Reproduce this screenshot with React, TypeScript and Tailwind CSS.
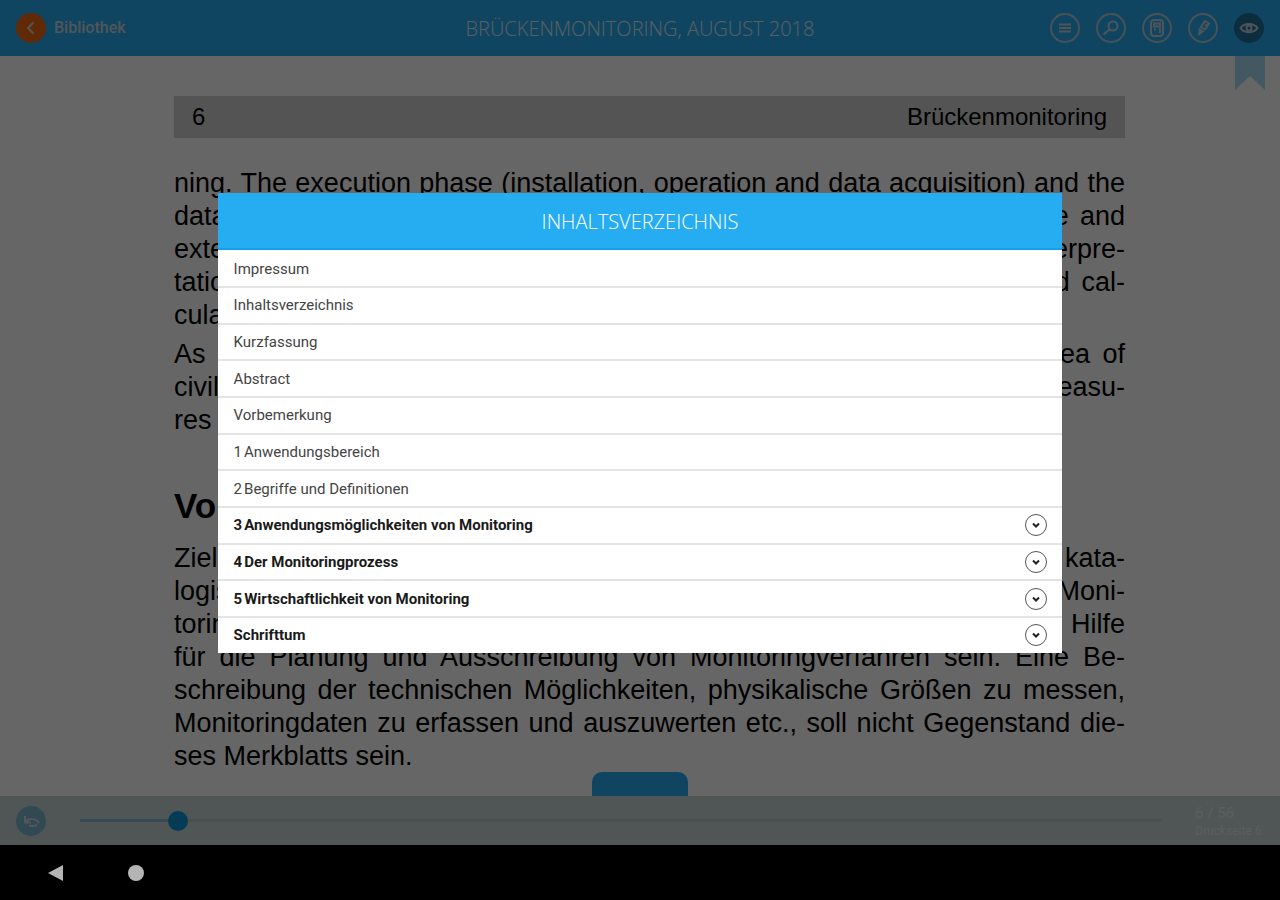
import { useState, type ReactNode } from "react";

type Chapter = {
	title: string;
	number?: string;
	nested?: boolean;
};

const CHAPTERS: Chapter[] = [
	{ title: "Impressum" },
	{ title: "Inhaltsverzeichnis" },
	{ title: "Kurzfassung" },
	{ title: "Abstract" },
	{ title: "Vorbemerkung" },
	{ number: "1", title: "Anwendungsbereich" },
	{ number: "2", title: "Begriffe und Definitionen" },
	{ number: "3", title: "Anwendungsmöglichkeiten von Monitoring", nested: true },
	{ number: "4", title: "Der Monitoringprozess", nested: true },
	{ number: "5", title: "Wirtschaftlichkeit von Monitoring", nested: true },
	{ title: "Schrifttum", nested: true },
];

const ABSTRACT_END = [
	"ning. The execution phase (installation, operation and data acquisition) and the",
	"data processing phase are described in detail with regard to their scope and",
	"extent. Some notes are given on the evaluation of results and their interpre-",
	"tation, as well as on the comparison between the measured values and cal-",
	"culations.",
];

const ABSTRACT_NOTE = [
	"As monitoring is being used more and more frequently in the wider area of",
	"civil engineering, there is a growing need for guidance on all such measu-",
	"res in practice.",
];

const PREFACE = [
	"Ziel des Merkblatts ist es, die Aufgaben des Monitorings in einer kata-",
	"logisierten Form zu erfassen und die Anforderungen an ein solches Moni-",
	"toring zu beschreiben. Das Merkblatt soll damit zugleich auch eine Hilfe",
	"für die Planung und Ausschreibung von Monitoringverfahren sein. Eine Be-",
	"schreibung der technischen Möglichkeiten, physikalische Größen zu messen,",
	"Monitoringdaten zu erfassen und auszuwerten etc., soll nicht Gegenstand die-",
	"ses Merkblatts sein.",
];

const PAGE_COUNT = 56;

// Every line fills the column except the last one of the paragraph.
function Paragraph({ lines }: { lines: string[] }) {
	return (
		<p className="text-[27px] leading-[33px] whitespace-nowrap">
			{lines.map((line, i) => (
				<span
					key={line}
					className={
						i < lines.length - 1
							? "block text-justify [text-align-last:justify]"
							: "block"
					}
				>
					{line}
				</span>
			))}
		</p>
	);
}

function ToolButton({
	label,
	active,
	children,
}: {
	label: string;
	active?: boolean;
	children: ReactNode;
}) {
	return (
		<button
			type="button"
			aria-label={label}
			className={
				active
					? "flex size-[30px] items-center justify-center rounded-full bg-[#207098] text-[#c4d4dc]"
					: "flex size-[30px] items-center justify-center rounded-full border-2 border-[#b8ccd8] text-[#c4d4dc]"
			}
		>
			<svg
				viewBox="0 0 20 20"
				className="size-5 shrink-0"
				fill="none"
				stroke="currentColor"
				strokeWidth="2"
			>
				{children}
			</svg>
		</button>
	);
}

export default function App() {
	const [page, setPage] = useState(6);
	const progress = ((page - 1) / (PAGE_COUNT - 1)) * 100;

	return (
		<div className="flex h-screen flex-col bg-black font-[Roboto,sans-serif]">
			<div className="relative flex min-h-0 flex-1 flex-col bg-white">
				<header className="grid h-14 shrink-0 grid-cols-[1fr_auto_1fr] items-center bg-[#26adf1] px-4">
					<button type="button" className="flex items-center gap-2 text-[#c9d6de]">
						<span className="flex size-[30px] items-center justify-center rounded-full bg-[#f06a10]">
							<svg
								viewBox="0 0 20 20"
								className="size-5 text-[#dcd0c8]"
								fill="none"
								stroke="currentColor"
								strokeWidth="2"
							>
								<path d="M12.500 4.500 7 10l5.500 5.500" />
							</svg>
						</span>
						<span className="text-base font-medium">Bibliothek</span>
					</button>
					<h1 className="pt-0.5 font-['Open_Sans',sans-serif] text-xl font-light text-[#e4eef4]">
						BRÜCKENMONITORING, AUGUST 2018
					</h1>
					<div className="flex justify-end gap-4">
						<ToolButton label="Inhaltsverzeichnis">
							<path d="M4 6.500h12M4 10h12M4 13.500h12" />
						</ToolButton>
						<ToolButton label="Suche">
							<circle cx="12" cy="8" r="4.500" />
							<path d="M8.800 11.200 2.500 16.500" />
						</ToolButton>
						<ToolButton label="Notizen">
							<rect x="4" y="2" width="12" height="16" rx="3" />
							<path d="M7 5.500h6v3H7zM7 11.500h2M13 10v5" />
						</ToolButton>
						<ToolButton label="Markieren">
							<path d="m8 9 4-6 4 2.500-4 6z" />
							<path d="m6 9.500 5.500 4L5 18z" fill="currentColor" stroke="none" />
							<path d="M12 6.500 14 8" />
						</ToolButton>
						<ToolButton label="Ansicht" active>
							<path d="M1.500 10C5 4.500 15 4.500 18.500 10 15 15.500 5 15.500 1.500 10z" />
							<circle cx="10" cy="10" r="2.500" />
						</ToolButton>
					</div>
				</header>

				<main className="relative min-h-0 flex-1 overflow-hidden pt-10 pr-[155px] pl-[174px] font-['Liberation_Sans',Arial,sans-serif] text-black">
					<div className="flex h-[42px] items-center justify-between bg-[#d3d3d3] px-[18px] text-2xl">
						<span>6</span>
						<span>Brückenmonitoring</span>
					</div>
					<article className="pt-[29px]">
						<Paragraph lines={ABSTRACT_END} />
						<div className="pt-[6px]">
							<Paragraph lines={ABSTRACT_NOTE} />
						</div>
						<h2 className="pt-[51px] pb-[18px] text-[35px] leading-9 font-bold">
							Vorbemerkung
						</h2>
						<Paragraph lines={PREFACE} />
					</article>
					<svg
						viewBox="0 0 30 34"
						className="absolute top-0 right-[15px] h-[34px] w-[30px] text-[#a8dcf0]"
						fill="currentColor"
					>
						<path d="M0 0h30v34L15 20 0 34z" />
					</svg>
					<button
						type="button"
						aria-label="Seitenübersicht"
						className="absolute bottom-0 left-1/2 h-6 w-24 -translate-x-1/2 rounded-t-[10px] bg-[#26adf1]"
					/>
				</main>

				<footer className="flex h-[49px] shrink-0 items-center bg-[#c8d7d7] px-4">
					<button
						type="button"
						aria-label="Zurück"
						className="mr-[34px] flex size-[30px] items-center justify-center rounded-full bg-[#7cb6d0] text-[#c8dce4]"
					>
						<svg
							viewBox="0 0 20 20"
							className="size-5"
							fill="none"
							stroke="currentColor"
							strokeWidth="2"
						>
							<path d="M4 5v6.500h6M4 11c4-4 11-4 14 1M8 14.500c3 .8 6 .5 8-.5" />
						</svg>
					</button>
					<div className="relative flex h-5 flex-1 items-center">
						<div className="h-[3px] w-full bg-[#b9c6c8]">
							<div
								className="h-full bg-[#88b4cc]"
								style={{ width: `${progress}%` }}
							/>
						</div>
						<input
							type="range"
							aria-label="Seite"
							min={1}
							max={PAGE_COUNT}
							value={page}
							onChange={(e) => setPage(Number(e.target.value))}
							className="absolute -left-2.5 h-5 w-[calc(100%+20px)] appearance-none bg-transparent [&::-webkit-slider-thumb]:size-5 [&::-webkit-slider-thumb]:appearance-none [&::-webkit-slider-thumb]:rounded-full [&::-webkit-slider-thumb]:bg-[#0c95d4]"
						/>
					</div>
					<div className="ml-[33px] w-[69px] pt-[3px] whitespace-nowrap text-[#e4e8ec]">
						<div className="text-[15px] leading-[18px]">
							{page} / {PAGE_COUNT}
						</div>
						<div className="text-xs leading-[18px]">Druckseite {page}</div>
					</div>
				</footer>

				<div className="absolute inset-0 flex items-center justify-center bg-black/60">
					<section
						role="dialog"
						aria-labelledby="toc-title"
						className="flex h-[460px] w-[66%] flex-col bg-white"
					>
						<h2
							id="toc-title"
							className="flex h-[57px] shrink-0 items-center justify-center border-b-2 border-[#12a0ee] bg-[#26adf1] pt-1 font-['Open_Sans',sans-serif] text-xl font-light text-white"
						>
							INHALTSVERZEICHNIS
						</h2>
						<ul className="flex min-h-0 flex-1 flex-col">
							{CHAPTERS.map((chapter) => (
								<li
									key={chapter.title}
									className="flex flex-1 items-center justify-between border-t-2 border-[#e4e4e4] pr-[15px] pl-4 first:border-transparent"
								>
									<a
										href="#"
										className={
											chapter.nested
												? "flex gap-0.5 text-[15px] leading-5 font-bold text-[#1a1a1a]"
												: "flex gap-0.5 text-[15px] leading-5 text-[#444]"
										}
									>
										{chapter.number && <span>{chapter.number}</span>}
										<span>{chapter.title}</span>
									</a>
									{chapter.nested && (
										<button
											type="button"
											aria-label={`${chapter.title} aufklappen`}
											className="flex size-[22px] items-center justify-center rounded-full border border-[#555] text-[#222]"
										>
											<svg
												viewBox="0 0 10 10"
												className="size-[10px]"
												fill="none"
												stroke="currentColor"
												strokeWidth="2"
											>
												<path d="M2 3.500 5 6.500l3-3" />
											</svg>
										</button>
									)}
								</li>
							))}
						</ul>
					</section>
				</div>
			</div>

			<nav className="flex h-[55px] shrink-0 items-center gap-16 pl-12 text-[#b4b4b4]">
				<button type="button" aria-label="Zurück">
					<svg viewBox="0 0 16 16" className="size-4" fill="currentColor">
						<path d="M0 8 15 0v16z" />
					</svg>
				</button>
				<button
					type="button"
					aria-label="Startbildschirm"
					className="size-4 rounded-full bg-current"
				/>
			</nav>
		</div>
	);
}
